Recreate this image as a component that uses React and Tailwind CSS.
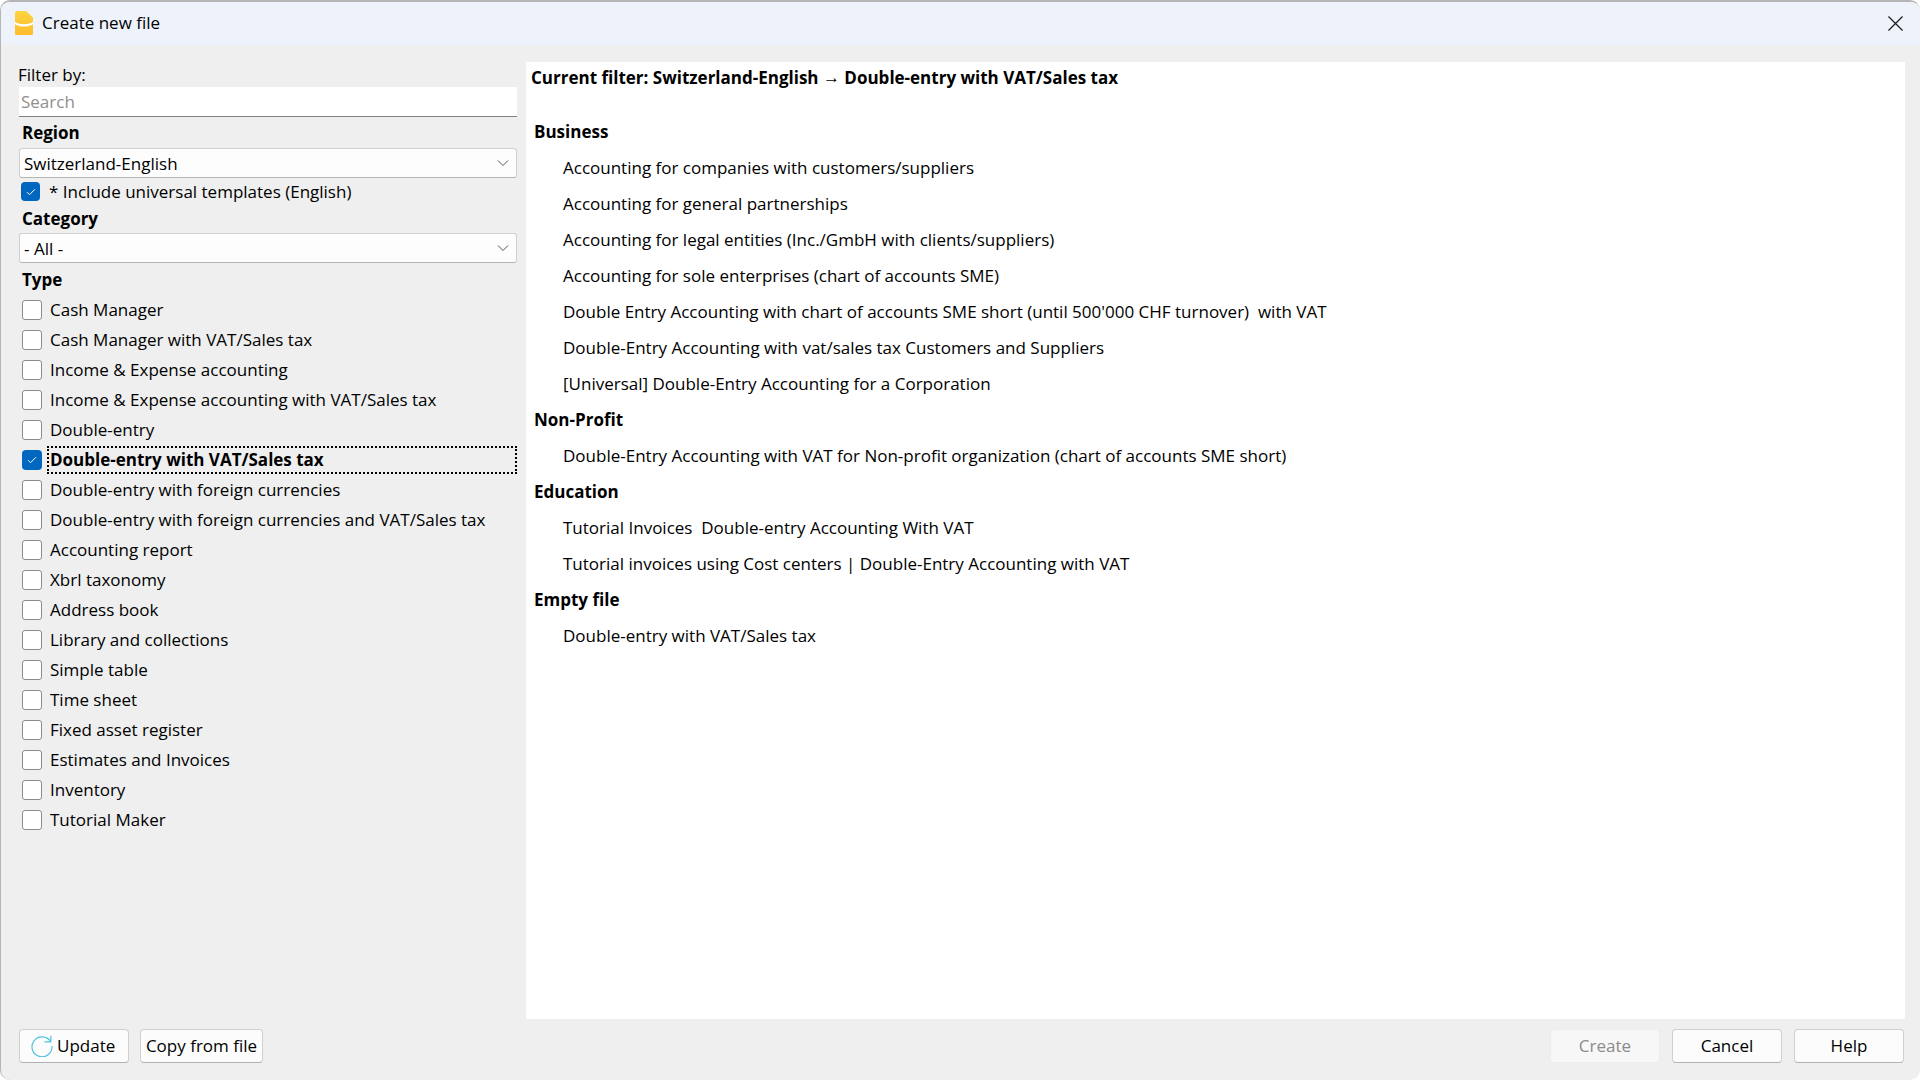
const types = [
  'Cash Manager',
  'Cash Manager with VAT/Sales tax',
  'Income & Expense accounting',
  'Income & Expense accounting with VAT/Sales tax',
  'Double-entry',
  'Double-entry with VAT/Sales tax',
  'Double-entry with foreign currencies',
  'Double-entry with foreign currencies and VAT/Sales tax',
  'Accounting report',
  'Xbrl taxonomy',
  'Address book',
  'Library and collections',
  'Simple table',
  'Time sheet',
  'Fixed asset register',
  'Estimates and Invoices',
  'Inventory',
  'Tutorial Maker',
];

const groups = [
  {
    title: 'Business',
    items: [
      'Accounting for companies with customers/suppliers',
      'Accounting for general partnerships',
      'Accounting for legal entities (Inc./GmbH with clients/suppliers)',
      'Accounting for sole enterprises (chart of accounts SME)',
      "Double Entry Accounting with chart of accounts SME short (until 500'000 CHF turnover)  with VAT",
      'Double-Entry Accounting with vat/sales tax Customers and Suppliers',
      '[Universal] Double-Entry Accounting for a Corporation',
    ],
  },
  {
    title: 'Non-Profit',
    items: ['Double-Entry Accounting with VAT for Non-profit organization (chart of accounts SME short)'],
  },
  {
    title: 'Education',
    items: [
      'Tutorial Invoices  Double-entry Accounting With VAT',
      'Tutorial invoices using Cost centers | Double-Entry Accounting with VAT',
    ],
  },
  {
    title: 'Empty file',
    items: ['Double-entry with VAT/Sales tax'],
  },
];

function Logo() {
  return (
    <svg width="18" height="24" viewBox="0 0 18 24" className="shrink-0">
      <defs>
        <linearGradient id="logoFill" x1="0" y1="0" x2="0" y2="1">
          <stop offset="0" stopColor="#fcd53f" />
          <stop offset="1" stopColor="#fdbb2d" />
        </linearGradient>
      </defs>
      <path d="M2 0h9l7 6.500v16a1.500 1.500 0 0 1-1.500 1.500h-15a1.500 1.500 0 0 1-1.500-1.500v-20.500a2 2 0 0 1 2-2z" fill="url(#logoFill)" />
      <path d="M0 11c5 3 13 3 18 0v2.200c-5 3.200-13 3.200-18 0z" fill="#fff" />
    </svg>
  );
}

function Chevron() {
  return (
    <svg width="12" height="8" viewBox="0 0 12 8" fill="none" stroke="#555" strokeWidth="1" className="shrink-0">
      <path d="M1 1.500l5 5 5-5" />
    </svg>
  );
}

function Check({ checked, size }) {
  if (checked) {
    return (
      <span className={`flex shrink-0 items-center justify-center rounded-[4px] bg-[#0067c0] ${size}`}>
        <svg width="10" height="8" viewBox="0 0 10 8" fill="none" stroke="#fff" strokeWidth="1">
          <path d="M1 4.200l2.500 2.500 5.500-5.500" />
        </svg>
      </span>
    );
  }
  return <span className={`shrink-0 rounded-[3px] border-[1.5px] border-[#8c8c8c] bg-white ${size}`} />;
}

function Combo({ label }) {
  return (
    <div className="flex h-[30px] items-center justify-between rounded-[3px] border border-[#d0d0d0] border-b-[#b4b4b4] bg-[#fdfdfd] pl-[4px] pr-[7px]">
      <span className="pt-[1px]">{label}</span>
      <Chevron />
    </div>
  );
}

function Button({ children, disabled, className }) {
  return (
    <button
      className={`flex h-[34px] items-center rounded-[4px] border ${
        disabled
          ? 'border-[#ececec] bg-[#f7f7f7] text-[#8b8b8b]'
          : 'border-[#d0d0d0] border-b-[#b0b0b0] bg-[#fcfcfc] text-black'
      } ${className}`}
    >
      {children}
    </button>
  );
}

export default function App() {
  return (
    <div className="h-screen w-screen overflow-hidden bg-white font-['Open_Sans',sans-serif] text-[17px] leading-[24px] text-black">
      <div className="flex h-full flex-col overflow-hidden rounded-[10px] border-l border-t-2 border-[#b5b5b5] bg-[#efefef]">
        <div className="flex h-[43px] shrink-0 items-center bg-[#eef3fb] pb-[1px] pl-[14px] pr-[17px]">
          <Logo />
          <span className="ml-[9px] flex-1 pb-[1px]">Create new file</span>
          <svg width="15" height="15" viewBox="0 0 16 16" fill="none" stroke="#1a1a1a" strokeWidth="1.300">
            <path d="M.5.5l15 15M15.500.5l-15 15" />
          </svg>
        </div>

        <div className="flex min-h-0 flex-1 pl-[18px] pr-[15px] pt-[17px]">
          <div className="w-[498px] shrink-0">
            <div className="-ml-[1px] flex h-[25px] items-center">Filter by:</div>
            <div className="flex h-[30px] items-center border-b border-[#808080] bg-white pl-[2px] pt-[1px] text-[#8f8f8f]">Search</div>
            <div className="flex h-[31px] items-center pl-[3px] font-bold">Region</div>
            <Combo label="Switzerland-English" />
            <div className="flex h-[27px] items-center pl-[2px]">
              <Check checked size="h-[19px] w-[19px]" />
              <span className="ml-[9px]">* Include universal templates (English)</span>
            </div>
            <div className="flex h-[28px] items-center pl-[3px] font-bold">Category</div>
            <Combo label="- All -" />
            <div className="flex h-[32px] items-center pl-[3px] pt-[1px] font-bold">Type</div>
            <div className="flex flex-col">
              {types.map((t, i) => {
                const on = i === 5;
                return (
                  <div key={t} className="flex h-[30px] items-center pl-[3px]">
                    <Check checked={on} size="h-[20px] w-[20px]" />
                    <span
                      className={`ml-[5px] flex h-[28px] flex-1 items-center pl-[1px] ${
                        on ? 'border-2 border-dotted border-black font-bold' : 'border-2 border-transparent'
                      }`}
                    >
                      {t}
                    </span>
                  </div>
                );
              })}
            </div>
          </div>

          <div className="ml-[9px] flex-1 bg-white pl-[5px] pt-[2px]">
            <div className="flex h-[28px] items-center whitespace-pre font-bold">
              Current filter: Switzerland-English <span className="font-['Liberation_Sans',sans-serif] font-normal">→</span> Double-entry with VAT/Sales tax
            </div>
            <div className="mt-[22px] pl-[3px]">
              {groups.map((g) => (
                <div key={g.title}>
                  <div className="flex h-[36px] items-center font-bold">{g.title}</div>
                  {g.items.map((item) => (
                    <div key={item} className="flex h-[36px] items-center whitespace-pre pl-[29px]">
                      {item}
                    </div>
                  ))}
                </div>
              ))}
            </div>
          </div>
        </div>

        <div className="flex h-[61px] shrink-0 items-start pl-[18px] pr-[16px] pt-[10px]">
          <Button className="w-[110px] pl-[11px]">
            <svg width="22" height="22" viewBox="0 0 22 22" fill="none" stroke="#4fc3dc" strokeWidth="1.200" className="mr-[4px]">
              <path d="M19.500 6.500A10 10 0 1 0 21 11" />
              <path d="M13.500 6.800h6.300V.8" />
            </svg>
            Update
          </Button>
          <Button className="ml-[11px] w-[123px] justify-center">Copy from file</Button>
          <div className="flex-1" />
          <Button disabled className="w-[110px] justify-center">Create</Button>
          <Button className="ml-[12px] w-[110px] justify-center">Cancel</Button>
          <Button className="ml-[12px] w-[110px] justify-center">Help</Button>
        </div>
      </div>
    </div>
  );
}
